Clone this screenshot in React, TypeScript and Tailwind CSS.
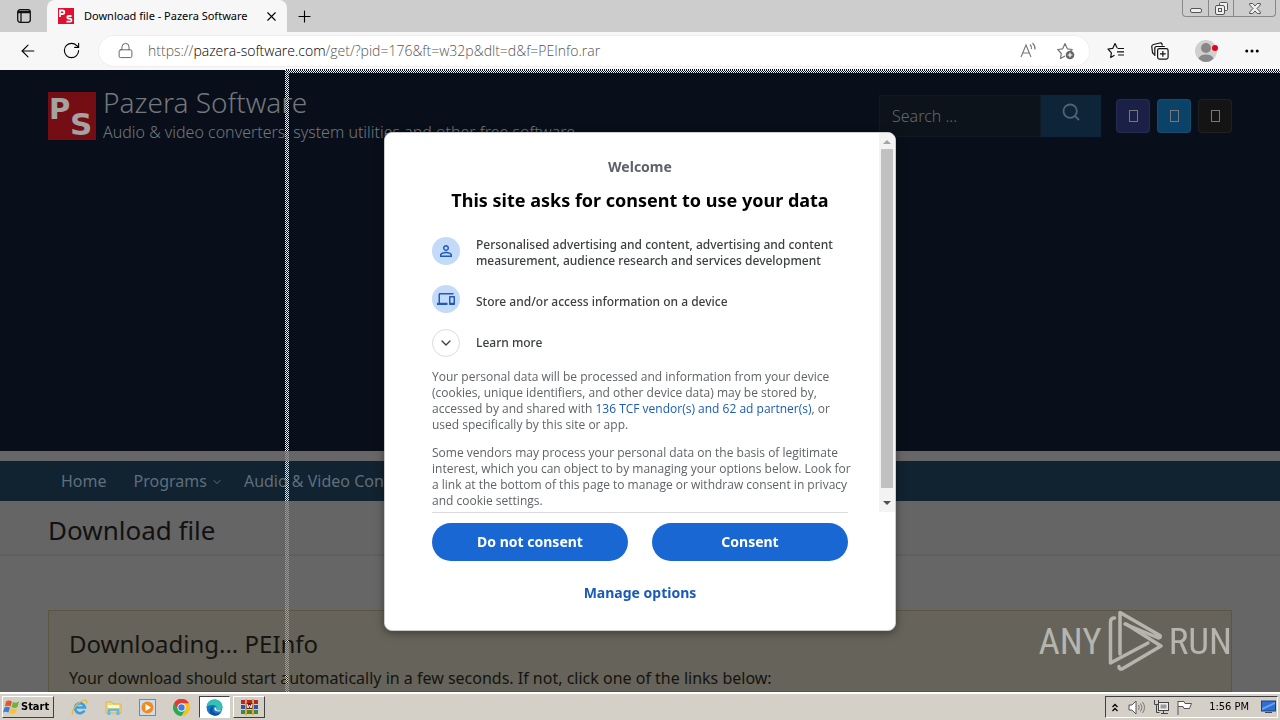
import React, { useState } from "react";
import {
  ArrowLeft,
  ChevronDown,
  Ellipsis,
  Lock,
  Plus,
  RotateCw,
  Search,
  X,
} from "lucide-react";
import { MdDevices, MdPersonOutline } from "react-icons/md";

const PazeraLogo = ({ className }: { className: string }) => (
  <svg viewBox="0 0 48 48" className={className} aria-hidden="true">
    <rect width="48" height="48" fill="currentColor" />
    <g fontFamily="'DejaVu Sans', sans-serif" fontWeight="bold" fill="#a5a2a2">
      <text x="1" y="27" fontSize="29">P</text>
      <text x="22" y="43" fontSize="31">S</text>
    </g>
  </svg>
);

const TabBar = () => (
  <div className="flex h-8 shrink-0 items-stretch bg-[#cdcdcd]">
    <button aria-label="Tab actions" className="flex w-[47px] items-center justify-center">
      <svg width="14" height="14" viewBox="0 0 14 14" fill="none" stroke="#111" strokeWidth="1.3">
        <rect x="0.7" y="0.7" width="12.6" height="12.6" rx="2.5" />
        <path d="M1 2.5h12M1 3.6h12M4 4v9" />
      </svg>
    </button>
    <div className="flex w-60 items-center rounded-t-lg bg-[#f7f7f7] pl-[11px] pr-2">
      <svg width="16" height="16" viewBox="0 0 16 16" className="shrink-0">
        <rect width="16" height="16" fill="#e01030" />
        <path d="M2 9V2.500h2.500q1.800 0 1.800 1.700T4.500 6H3M13.500 8h-2.700q-1.500 0-1.500 1.300t1.500 1.400h1.200q1.500.100 1.500 1.500T12 13.700H8.500" fill="none" stroke="#fff" strokeWidth="1.800" />
      </svg>
      <span className="ml-2.5 whitespace-nowrap text-[11px] text-black">
        Download file - Pazera Software
      </span>
      <button aria-label="Close tab" className="ml-auto">
        <X size={15} strokeWidth={1.8} />
      </button>
    </div>
    <button aria-label="New tab" className="flex w-[34px] items-center justify-center">
      <Plus size={19} strokeWidth={1.4} />
    </button>
    <div className="ml-auto mr-1 flex h-[17px] rounded-b border border-t-0 border-[#888] text-[#777]">
      <button aria-label="Minimize" className="flex w-[25px] items-end justify-center pb-[3px]">
        <svg width="12" height="5" viewBox="0 0 12 5" fill="#eee" stroke="#555">
          <rect x="0.5" y="0.5" width="11" height="4" rx="1.5" />
        </svg>
      </button>
      <button aria-label="Restore" className="flex w-[26px] items-center justify-center border-x border-[#888]">
        <svg width="13" height="13" viewBox="0 0 13 13" fill="#eee" stroke="#555">
          <path d="M4.5 3.500v-2q0-1 1-1h6q1 0 1 1v6q0 1-1 1h-2" />
          <rect x="0.500" y="3.500" width="9" height="9" rx="1.500" />
          <rect x="3.500" y="6.500" width="3" height="3" />
        </svg>
      </button>
      <button aria-label="Close" className="flex w-[41px] items-center justify-center">
        <svg width="12" height="11" viewBox="0 0 12 11" fill="#eee" stroke="#555">
          <path d="M.7.500h3L6 3 8.300.500h3v1.500L8 5.500l3.300 3.500v1.500h-3L6 8l-2.300 2.500h-3V9L4 5.500.700 2z" />
        </svg>
      </button>
    </div>
  </div>
);

const Toolbar = () => (
  <div className="flex h-[38px] shrink-0 items-center bg-[#f7f7f7] pb-px">
    <button aria-label="Back" className="ml-[18px]">
      <ArrowLeft size={20} strokeWidth={1.3} />
    </button>
    <button aria-label="Refresh" className="ml-6">
      <RotateCw size={19} strokeWidth={1.4} />
    </button>
    <div className="relative ml-[18px] flex h-[30px] flex-1 items-center rounded-full bg-white pl-[18px] pr-3.5 ring-1 ring-[#efefef]">
      <Lock size={17} strokeWidth={1.4} className="text-[#666]" />
      <span className="ml-3.5 whitespace-nowrap font-['Open_Sans',sans-serif] text-[14px] font-light text-[#555]">
        https://<span className="text-black">pazera-software.com</span>
        /get/?pid=176&amp;ft=w32p&amp;dlt=d&amp;f=PEInfo.rar
      </span>
      <input aria-label="Address" className="absolute inset-y-0 left-12 right-24 bg-transparent outline-none" />
      <button aria-label="Read aloud" className="ml-auto text-[#777]">
        <svg width="17" height="17" viewBox="0 0 17 17" fill="none" stroke="currentColor" strokeWidth="1.1">
          <path d="M1 15 6 3l5 12M2.800 11h6.400M10 2.500q2 2 1.500 4.500M12.500 1q3 3 2.500 6.500" />
        </svg>
      </button>
      <button aria-label="Add to favorites" className="ml-5 text-[#777]">
        <svg width="18" height="18" viewBox="0 0 18 18" fill="none" stroke="currentColor" strokeWidth="1.200" strokeLinejoin="round">
          <path d="M8 14l-4.500 2.500.800-5L.700 7.500l5-.700L8 1.500l2.300 5.300 5 .700-2 1.900" />
          <circle cx="13" cy="13" r="4.300" fill="#666" stroke="none" />
          <path d="M13 10.700v4.600M10.700 13h4.600" stroke="#fff" />
        </svg>
      </button>
    </div>
    <button aria-label="Favorites" className="ml-[18px]">
      <svg width="18" height="17" viewBox="0 0 18 17" fill="none" stroke="#111" strokeWidth="1.200" strokeLinejoin="round">
        <path d="M7.500 13.200 3.700 15.500l.700-4.700L1 7l4.700-.600L8 1.500l2.200 4.400M10.500 6.500H17M10 9.800h7M11 13h6" />
      </svg>
    </button>
    <button aria-label="Collections" className="ml-[26px]">
      <svg width="18" height="18" viewBox="0 0 18 18" fill="none" stroke="#111" strokeWidth="1.200">
        <path d="M3.500 12.500q-1.500-.500-2-2L.800 5q-.300-2 1.700-2.500L9 1q1.500-.300 2 1l.300 1.500" />
        <path d="M3.800 14V6.500q0-2 2-2h8" />
        <rect x="6.600" y="6.600" width="10.500" height="10.500" rx="1.800" />
        <path d="M11.850 9v5.700M9 11.850h5.700" />
      </svg>
    </button>
    <button aria-label="Profile" className="ml-[26px]">
      <svg width="23" height="22" viewBox="0 0 23 22">
        <circle cx="11" cy="11" r="11" fill="#d2d0ce" />
        <circle cx="11" cy="8" r="5" fill="#888" />
        <path d="M3.500 18.500Q5 14.500 11 14.500t7.500 4Q15 22 11 22t-7.500-3.500z" fill="#888" />
        <circle cx="20" cy="8" r="3" fill="#e8001c" />
      </svg>
    </button>
    <button aria-label="Settings and more" className="ml-[25px] mr-[19px]">
      <Ellipsis size={18} strokeWidth={2} />
    </button>
  </div>
);

const socials = [
  { label: "Facebook", style: "bg-[#1b2146]" },
  { label: "Twitter", style: "bg-[#0b4267]" },
  { label: "GitHub", style: "bg-[#141414]" },
];

const SiteHeader = () => (
  <header className="flex h-[381px] shrink-0 items-start bg-[#080f1a] px-12 pt-4">
    <PazeraLogo className="mt-1.5 h-12 w-12 shrink-0 text-[#750d14]" />
    <div className="ml-[7px] whitespace-nowrap text-[#73777c]">
      <h1 className="text-[28px] font-light leading-8">Pazera Software</h1>
      <p className="mt-0.5 text-[16px] font-light leading-6">
        Audio &amp; video converters, system utilities and other free software
      </p>
    </div>
    <form className="ml-auto mt-[9px] flex h-[42px]" onSubmit={(e) => e.preventDefault()}>
      <input
        aria-label="Search"
        placeholder="Search ..."
        className="w-[162px] border border-[#111a22] bg-[#0c131b] px-3 text-[16px] font-light text-[#666] placeholder:text-[#63676c]"
      />
      <button aria-label="Submit search" className="flex w-[60px] items-start justify-center bg-[#0e2438] pt-[7px] text-[#52626f]">
        <Search size={20} strokeWidth={2.200} />
      </button>
    </form>
    <div className="ml-[15px] mt-[13px] flex gap-[7px]">
      {socials.map((item) => (
        <a
          key={item.label}
          href="#"
          aria-label={item.label}
          className={`flex h-[34px] w-[34px] items-center justify-center rounded-sm border border-white/5 ${item.style}`}
        >
          <span className="h-3 w-[9px] border border-[#77777c]" />
        </a>
      ))}
    </div>
  </header>
);

const SitePage = () => (
  <div className="flex h-full flex-col bg-[#666]">
    <SiteHeader />
    <nav className="mt-2.5 flex h-10 shrink-0 items-center whitespace-nowrap bg-[#112230] pl-[61px] text-[16px] text-[#5f6f7b]">
      <a href="#">Home</a>
      <a href="#" className="ml-[27px] flex items-center">
        Programs
        <ChevronDown size={12} strokeWidth={2} className="ml-1 mt-0.5" />
      </a>
      <a href="#" className="ml-[21px]">Audio &amp; Video Converters</a>
    </nav>
    <div className="flex h-[55px] shrink-0 items-center border-b-2 border-[#5f5f5f] bg-[#656565] px-12 pt-1">
      <h2 className="text-[26px] leading-8 text-[#111]">Download file</h2>
    </div>
    <div className="mx-12 mt-[54px] flex-1 border border-[#5a563f] bg-[#65635a] px-5 pt-[17px] text-[#15140f]">
      <h3 className="text-[24px] leading-8">Downloading... PEInfo</h3>
      <p className="mt-1.5 text-[16px] leading-6">
        Your download should start automatically in a few seconds. If not, click one of the links below:
      </p>
    </div>
  </div>
);

const ConsentDialog = () => {
  const [showMore, setShowMore] = useState(false);

  return (
    <div
      role="dialog"
      aria-label="Consent"
      className="flex w-[512px] flex-col overflow-hidden rounded-lg border border-[#ccc] bg-white shadow-[0_2px_8px_rgba(0,0,0,0.4)]"
    >
      <div className="flex h-[379px]">
        <div className="flex-1 overflow-hidden pl-[47px] pr-[31px] pt-6">
          <p className="text-center text-[14px] font-bold leading-5 text-[#5f6368]">Welcome</p>
          <h2 className="mt-[11px] text-center text-[18px] font-bold leading-6 text-black">
            This site asks for consent to use your data
          </h2>
          <div className="mt-[25px] flex flex-col gap-4 text-[12px] font-medium leading-4 text-[#3c4043]">
            <div className="flex gap-4">
              <span className="flex h-7 w-7 shrink-0 items-center justify-center rounded-full bg-[#c3daf8] text-[#1e5bb8]">
                <MdPersonOutline size={18} />
              </span>
              <p>
                Personalised advertising and content, advertising and content
                measurement, audience research and services development
              </p>
            </div>
            <div className="flex items-center gap-4">
              <span className="flex h-7 w-7 shrink-0 items-center justify-center rounded-full bg-[#c3daf8] text-[#1e5bb8]">
                <MdDevices size={18} />
              </span>
              <p className="pt-1.5">Store and/or access information on a device</p>
            </div>
            <button
              onClick={() => setShowMore(!showMore)}
              aria-expanded={showMore}
              className="flex items-center gap-4"
            >
              <span className="flex h-7 w-7 items-center justify-center rounded-full border border-[#dadce0]">
                <ChevronDown size={16} strokeWidth={2} />
              </span>
              Learn more
            </button>
          </div>
          <div className="mt-3 flex flex-col gap-3 font-['Open_Sans',sans-serif] text-[12px] leading-4 text-[#5f6368]">
            <p>
              Your personal data will be processed and information from your device
              (cookies, unique identifiers, and other device data) may be stored by,
              accessed by and shared with{" "}
              <a href="#" className="text-[#1a5ab8]">136 TCF vendor(s) and 62 ad partner(s)</a>,
              or used specifically by this site or app.
            </p>
            <p className="-mr-2">
              Some vendors may process your personal data on the basis of legitimate
              interest, which you can object to by managing your options below. Look for
              a link at the bottom of this page to manage or withdraw consent in privacy
              and cookie settings.
            </p>
          </div>
        </div>
        <div className="flex w-4 flex-col items-center bg-[#f3f3f3]">
          <span className="mb-[5px] mt-[7px] border-x-4 border-b-4 border-x-transparent border-b-[#a3a3a3]" />
          <span className="w-3 flex-1 bg-[#c1c1c1]" />
          <span className="mb-[7px] mt-[13px] border-x-4 border-t-4 border-x-transparent border-t-[#505050]" />
        </div>
      </div>
      <div className="mx-[47px] flex gap-6 border-t border-[#dadce0] pt-2.5 text-[14px] font-bold text-white">
        <button className="h-[38px] flex-1 rounded-full bg-[#1967d2]">Do not consent</button>
        <button className="h-[38px] flex-1 rounded-full bg-[#1967d2]">Consent</button>
      </div>
      <button className="mx-auto mb-[27px] mt-[22px] text-[14px] font-bold leading-5 text-[#1a5ab8]">
        Manage options
      </button>
    </div>
  );
};

const Watermark = () => (
  <div className="absolute bottom-5 right-12 flex items-center gap-1.5 font-['Liberation_Sans_Narrow','Roboto_Condensed',Roboto,sans-serif] text-[37px] leading-none text-[#b5b5ae]">
    ANY
    <svg width="55" height="62" viewBox="0 0 55 62" fill="none" stroke="currentColor" strokeWidth="3.500" strokeLinecap="round" strokeLinejoin="round">
      <path d="M12 44V2.500L52 25.500q1 2-1.500 2.500L17 14" />
      <path d="M6.500 8Q2.500 8 2.500 12V53L40 33" />
      <path d="M18 14 53 36 14 59q-3 .500-3-2.500" />
    </svg>
    RUN
  </div>
);

const raised = "border border-t-white border-l-white border-r-[#404040] border-b-[#404040]";
const sunken = "border border-t-[#404040] border-l-[#404040] border-r-white border-b-white";

const Taskbar = () => (
  <footer className="flex h-7 shrink-0 items-center border-t-2 border-white bg-[#d4d0c8] px-0.5 pb-px pt-px font-['DejaVu_Sans_Condensed','DejaVu_Sans',sans-serif] text-[11px] text-black">
    <button className={`flex h-[22px] w-[52px] items-center gap-px font-bold ${raised}`}>
      <svg width="17" height="16" viewBox="0 0 17 16" className="shrink-0">
        <path d="M3 2.500q3-2 6 0L7.500 7.500q-3-1.500-5.500 0z" fill="#e8552b" />
        <path d="M10 3q3 1.500 6-.500L14.500 8q-3 2-6 0z" fill="#6db33f" />
        <path d="M1.500 8.500q3-1.500 5.500 0L5.500 13.500q-3-1.500-5.500 0z" fill="#3a7fd5" />
        <path d="M8 9q3 2 6 0l-1.500 5q-3 1.500-6 0z" fill="#f8c22e" />
      </svg>
      Start
    </button>
    <button aria-label="Internet Explorer" className="ml-[17px]">
      <svg width="17" height="17" viewBox="0 0 17 17" fill="none">
        <path d="M13.500 11.500A5 5 0 1 1 14 8.500H5" stroke="#3aa0e0" strokeWidth="2.600" />
        <path d="M2 15.500C-.500 13 5 5 10 2.500c5-2.500 6.500-1 5.500 2" stroke="#e9b93a" strokeWidth="1.300" />
      </svg>
    </button>
    <button aria-label="Explorer" className="ml-[17px]">
      <svg width="17" height="17" viewBox="0 0 17 17">
        <path d="M1 3h6l1 2h8v9H1z" fill="#f2d878" stroke="#c5a648" strokeWidth=".600" />
        <path d="M3 6h11v3H3z" fill="#fff7cf" />
        <path d="M2.500 16V9.500h12V16h-3v-4h-6v4z" fill="#6bb7dd" />
      </svg>
    </button>
    <button aria-label="Media Player" className="ml-[17px]">
      <svg width="17" height="17" viewBox="0 0 17 17">
        <rect x=".5" y=".5" width="16" height="16" fill="#c8dff2" stroke="#5b8fc4" />
        <circle cx="8.500" cy="8.500" r="6" fill="#f28a1c" />
        <path d="M6.500 5v7l5.500-3.500z" fill="#fff" />
      </svg>
    </button>
    <button aria-label="Chrome" className="ml-[17px]">
      <svg width="17" height="17" viewBox="0 0 16 16">
        <path d="M8 8 1.070 4A8 8 0 0 1 14.930 4z" fill="#e33b2e" />
        <path d="M8 8V0l6.930 4A8 8 0 0 1 8 16l4-6z" fill="#fbc116" />
        <path d="M1.070 4 8 8l3.500 2L8 16A8 8 0 0 1 1.070 4z" fill="#2da94f" />
        <path d="M8 4h6.930A8 8 0 0 0 1.070 4L4.500 10z" fill="#e33b2e" />
        <circle cx="8" cy="8" r="3.900" fill="#fff" />
        <circle cx="8" cy="8" r="3" fill="#3b7de8" />
      </svg>
    </button>
    <button aria-label="Edge" className={`ml-[9px] flex h-[22px] w-[31px] items-center justify-center bg-white ${sunken}`}>
      <svg width="17" height="17" viewBox="0 0 17 17">
        <circle cx="8.500" cy="8.500" r="8" fill="#1577c8" />
        <path d="M.600 7.500C1.500-1.500 15-2 16.500 7q.300 4-3.500 4.500-3.500.300-2.500-2 .500-3-3-3.500-4.500-.500-6.900 1.500z" fill="#35c1b1" />
        <path d="M7 7q-2 6 3 7.500 3 .500 5.500-1.500-3 4.500-7.500 3.500Q2.500 15 4 10q1-2.500 3-3z" fill="#0c4f9e" />
        <path d="M9 8q-1.500 2.500 1 4 3 1.200 6-.500-2-.100-3 0-3.500.300-2.500-2z" fill="#fff" />
      </svg>
    </button>
    <button aria-label="WinRAR" className={`ml-[3px] flex h-[22px] w-8 items-center justify-center ${raised}`}>
      <svg width="17" height="16" viewBox="0 0 17 16">
        <path d="M0 1h17v4H0z" fill="#b3262d" />
        <path d="M0 6h17v4H0z" fill="#3450b8" />
        <path d="M0 11h17v4H0z" fill="#3d8b37" />
        <path d="M4 0h2v16H4zM11 0h2v16h-2z" fill="#e0a83a" />
        <path d="M5.500 4h6v6h-6z" fill="#6b2026" />
        <path d="M6 5l1 4 1.500-3L10 9l1-4" fill="none" stroke="#fff" />
      </svg>
    </button>
    <div className={`ml-auto flex h-[22px] items-center pl-1.5 pr-px ${sunken}`}>
      <svg width="6" height="9" viewBox="0 0 6 9" fill="none" stroke="#000" strokeWidth="1.300">
        <path d="M.5 4 3 1.500 5.500 4M.5 8 3 5.500 5.500 8" />
      </svg>
      <svg width="17" height="15" viewBox="0 0 17 15" fill="#fff" stroke="#555" className="ml-2.5">
        <path d="M1 5h3l4-4v13l-4-4H1z" />
        <path d="M10.500 5q1.500 2.500 0 5M12.500 3.500q3 4 0 8M14.500 2q4 5.500 0 11" fill="none" stroke="#777" />
      </svg>
      <svg width="17" height="16" viewBox="0 0 17 16" fill="#eee" stroke="#444" className="ml-2">
        <rect x="5.500" y="3.500" width="10" height="8" />
        <rect x="7.500" y="5.500" width="6" height="4" fill="#999" stroke="none" />
        <path d="M8 14.500h7M10.500 12v2" />
        <path d="M1.500 1v4.500h4V1M3.500 6v7.500h3" fill="none" />
      </svg>
      <svg width="17" height="15" viewBox="0 0 17 15" fill="#fff" stroke="#555" className="ml-1.5">
        <path d="M2 15V1M2 1.500h6l1 2h6.500l-2 5H8l-1-2H2" />
      </svg>
      <span className="ml-4 whitespace-nowrap">1:56 PM</span>
      <svg width="15" height="14" viewBox="0 0 15 14" className="ml-3">
        <rect x=".5" y="1" width="14" height="10" fill="#2f6fd0" stroke="#1d3f8a" />
        <path d="M1 8 14 2v2L1 10z" fill="#6aa5f0" />
        <path d="M4 12.500h7" stroke="#445" />
      </svg>
    </div>
  </footer>
);

const App = () => {
  return (
    <div className="flex h-screen flex-col overflow-hidden font-['Noto_Sans','Open_Sans',sans-serif]">
      <TabBar />
      <Toolbar />
      <main className="relative min-h-0 flex-1">
        <SitePage />
        {/* outline of the window being dragged */}
        <div className="absolute -top-px bottom-0 left-[285px] w-1 bg-[repeating-conic-gradient(#fff_0_25%,#000_0_50%)] bg-[length:2px_2px] mix-blend-difference" />
        <div className="absolute -top-px left-[289px] right-0 h-1 bg-[repeating-conic-gradient(#fff_0_25%,#000_0_50%)] bg-[length:2px_2px] mix-blend-difference" />
        <Watermark />
        <div className="absolute inset-0 flex items-center justify-center">
          <ConsentDialog />
        </div>
      </main>
      <Taskbar />
    </div>
  );
};

export default App;
